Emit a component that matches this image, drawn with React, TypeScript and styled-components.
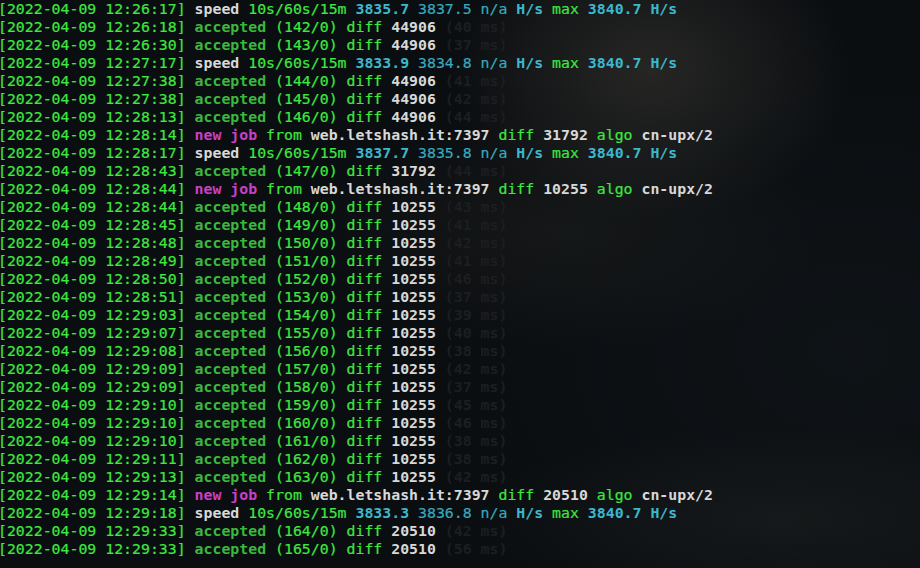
import React from "react";
import styled, { createGlobalStyle } from "styled-components";

const Global = createGlobalStyle`
  html, body { margin: 0; padding: 0; background: #0b0e11; }
  #root { width: 920px; height: 568px; }
`;

const Screen = styled.div`
  width: 920px;
  height: 568px;
  overflow: hidden;
  background:
    radial-gradient(ellipse 200px 150px at 650px 70px, rgba(60, 58, 52, 0.55), rgba(60, 58, 52, 0) 100%),
    radial-gradient(ellipse 260px 120px at 560px 230px, rgba(40, 40, 36, 0.35), rgba(40, 40, 36, 0) 100%),
    radial-gradient(ellipse 320px 90px at 780px 520px, rgba(38, 42, 40, 0.35), rgba(38, 42, 40, 0) 100%),
    radial-gradient(ellipse 400px 300px at 850px 350px, rgba(16, 22, 26, 0.6), rgba(16, 22, 26, 0) 100%),
    #0b0e11;
`;

const Log = styled.div`
  display: flex;
  flex-direction: column;
  margin-left: -2px;
  font-family: "DejaVu Sans Mono", "Liberation Mono", monospace;
  font-size: 14.85px;
  line-height: 18px;
  white-space: pre;
`;

const Line = styled.div`
  height: 18px;
`;

type Tone = "ts" | "green" | "acc" | "white" | "cyan" | "cyanB" | "mag" | "dim";

const colors: Record<Tone, string> = {
  ts: "#3ee83e",
  green: "#3ee83e",
  acc: "#3cb83c",
  white: "#d8d8d8",
  cyan: "#38a9bd",
  cyanB: "#3cb8cc",
  mag: "#c840c8",
  dim: "#1c1e20",
};

const bolds: Record<Tone, boolean> = {
  ts: false,
  green: false,
  acc: true,
  white: true,
  cyan: false,
  cyanB: true,
  mag: true,
  dim: true,
};

const Seg = styled.span<{ $tone: Tone }>`
  color: ${(p) => colors[p.$tone]};
  font-weight: ${(p) => (bolds[p.$tone] ? 700 : 400)};
  -webkit-text-stroke: ${(p) => (bolds[p.$tone] ? "0" : "0.2px")} currentColor;
`;

type Part = [Tone, string];

const speed = (t: string, a: string, b: string): Part[] => [
  ["ts", `[2022-04-09 ${t}] `],
  ["white", "speed"],
  ["green", " 10s/60s/15m "],
  ["cyanB", a],
  ["cyan", ` ${b} n/a `],
  ["cyanB", "H/s"],
  ["green", " max "],
  ["cyanB", "3840.7 H/s"],
];

const acc = (t: string, n: number, d: string, ms: number): Part[] => [
  ["ts", `[2022-04-09 ${t}] `],
  ["acc", "accepted"],
  ["green", ` (${n}/0) diff `],
  ["white", d],
  ["dim", ` (${ms} ms)`],
];

const job = (t: string, d: string): Part[] => [
  ["ts", `[2022-04-09 ${t}] `],
  ["mag", "new job"],
  ["green", " from "],
  ["white", "web.letshash.it:7397"],
  ["green", " diff "],
  ["white", d],
  ["green", " algo "],
  ["white", "cn-upx/2"],
];

const lines: Part[][] = [
  speed("12:26:17", "3835.7", "3837.5"),
  acc("12:26:18", 142, "44906", 40),
  acc("12:26:30", 143, "44906", 37),
  speed("12:27:17", "3833.9", "3834.8"),
  acc("12:27:38", 144, "44906", 41),
  acc("12:27:38", 145, "44906", 42),
  acc("12:28:13", 146, "44906", 44),
  job("12:28:14", "31792"),
  speed("12:28:17", "3837.7", "3835.8"),
  acc("12:28:43", 147, "31792", 44),
  job("12:28:44", "10255"),
  acc("12:28:44", 148, "10255", 43),
  acc("12:28:45", 149, "10255", 41),
  acc("12:28:48", 150, "10255", 42),
  acc("12:28:49", 151, "10255", 41),
  acc("12:28:50", 152, "10255", 46),
  acc("12:28:51", 153, "10255", 37),
  acc("12:29:03", 154, "10255", 39),
  acc("12:29:07", 155, "10255", 40),
  acc("12:29:08", 156, "10255", 38),
  acc("12:29:09", 157, "10255", 42),
  acc("12:29:09", 158, "10255", 37),
  acc("12:29:10", 159, "10255", 45),
  acc("12:29:10", 160, "10255", 46),
  acc("12:29:10", 161, "10255", 38),
  acc("12:29:11", 162, "10255", 38),
  acc("12:29:13", 163, "10255", 42),
  job("12:29:14", "20510"),
  speed("12:29:18", "3833.3", "3836.8"),
  acc("12:29:33", 164, "20510", 42),
  acc("12:29:33", 165, "20510", 56),
];

export default function App() {
  return (
    <>
      <Global />
      <Screen>
        <Log>
          {lines.map((parts, i) => (
            <Line key={i}>
              {parts.map(([tone, text], j) => (
                <Seg key={j} $tone={tone}>
                  {text}
                </Seg>
              ))}
            </Line>
          ))}
        </Log>
      </Screen>
    </>
  );
}
